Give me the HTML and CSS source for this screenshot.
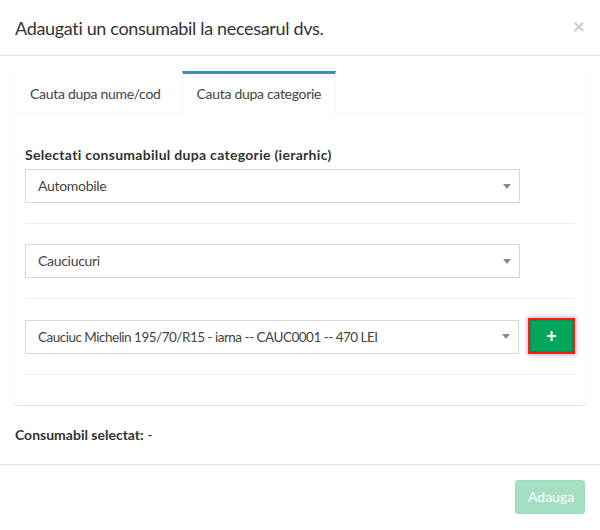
FILE: index.html
```html
<!DOCTYPE html>
<html>
<head>
<meta charset="utf-8">
<link rel="stylesheet" href="styles.css">
</head>
<body>
<div class="modal">
  <div class="modal-header">
    <h4 class="modal-title">Adaugati un consumabil la necesarul dvs.</h4>
    <span class="close">×</span>
  </div>
  <div class="modal-body">
    <div class="tabs-box">
      <ul class="nav-tabs">
        <li class="tab">Cauta dupa nume/cod</li>
        <li class="tab active">Cauta dupa categorie</li>
      </ul>
      <div class="tab-content">
        <label class="lbl">Selectati consumabilul dupa categorie (ierarhic)</label>
        <div class="row">
          <div class="select"><span class="sel-text">Automobile</span><span class="caret"></span></div>
        </div>
        <hr class="sep">
        <div class="row">
          <div class="select"><span class="sel-text">Cauciucuri</span><span class="caret"></span></div>
        </div>
        <hr class="sep">
        <div class="row">
          <div class="select"><span class="sel-text long">Cauciuc Michelin 195/70/R15 - iarna -- CAUC0001 -- 470 LEI</span><span class="caret"></span></div>
          <button class="btn-add">+</button>
        </div>
        <hr class="sep">
      </div>
    </div>
    <p class="selected"><b>Consumabil selectat:</b> -</p>
  </div>
  <div class="modal-footer">
    <button class="btn-submit">Adauga</button>
  </div>
</div>
</body>
</html>
```

FILE: styles.css
```css
* { box-sizing: border-box; }
html, body {
  margin: 0;
  padding: 0;
  background: #fff;
  font-family: "Lato", "Liberation Sans", sans-serif;
  font-size: 14px;
  line-height: 20px;
  color: #333;
}
.modal { width: 600px; }
.modal-header {
  display: flex;
  justify-content: space-between;
  align-items: flex-start;
  padding: 15px 15px 14px 15px;
  border-bottom: 1px solid #e5e5e5;
}
.modal-title {
  margin: 0;
  font-size: 18px;
  font-weight: 400;
  line-height: 26px;
  letter-spacing: -0.33px;
  color: #333;
}
.close {
  font-size: 21px;
  font-weight: 700;
  line-height: 1;
  color: #000;
  opacity: 0.2;
}
.modal-body { padding: 15px 15px 19px 15px; }
.tabs-box {
  background: #fff;
  border-radius: 3px;
  box-shadow: 0 1px 1px rgba(0,0,0,0.12), 0 0 1px rgba(0,0,0,0.06);
  margin-bottom: 20px;
}
.nav-tabs {
  display: flex;
  list-style: none;
  margin: 0;
  padding: 0;
  border-bottom: 1px solid #f4f4f4;
}
.tab {
  padding: 10px 15px;
  border-top: 3px solid transparent;
  margin-right: 6px;
  margin-bottom: -1px;
  color: #444;
  line-height: 20px;
  letter-spacing: -0.3px;
}
.tab.active {
  border-top-color: #3c8dbc;
  border-left: 1px solid #f4f4f4;
  border-right: 1px solid #f4f4f4;
  background: #fff;
  padding: 10px 14px;
}
.tab-content { padding: 31px 10px 10px 10px; }
.lbl {
  display: block;
  font-weight: 700;
  margin-bottom: 4px;
  color: #333;
  letter-spacing: 0.3px;
}
.row {
  display: flex;
  align-items: center;
  gap: 9px;
}
.select {
  width: 495px;
  height: 34px;
  border: 1px solid #d2d6de;
  display: flex;
  align-items: center;
  justify-content: space-between;
  padding: 0 8px 0 12px;
  color: #444;
}
.sel-text { white-space: nowrap; letter-spacing: -0.3px; }
.sel-text.long { font-size: 13.5px; letter-spacing: -0.5px; }
.caret {
  width: 0;
  height: 0;
  border-top: 5px solid #888;
  border-left: 4px solid transparent;
  border-right: 4px solid transparent;
}
.sep {
  border: 0;
  border-top: 1px solid #eee;
  margin: 20px 0;
}
.btn-add {
  width: 47px;
  height: 36px;
  margin-top: -1px;
  background: #00a65a;
  border: 2px solid #ff1a0a;
  color: #fff;
  font-family: "Lato", sans-serif;
  font-size: 18px;
  font-weight: 900;
  line-height: 1;
  padding: 0;
  box-shadow: 0 0 4px 1px rgba(90,80,255,0.45), inset 0 0 0 1px #0b8a57;
}
.selected {
  margin: 0;
  line-height: 20px;
  color: #333;
}
.modal-footer {
  display: flex;
  justify-content: flex-end;
  padding: 15px;
  border-top: 1px solid #e5e5e5;
}
.btn-submit {
  background: #a3dfc2;
  border: 1px solid #9bdcbd;
  border-radius: 3px;
  color: #fff;
  font-family: "Lato", sans-serif;
  font-size: 14px;
  padding: 6px 12px;
  line-height: 20px;
  width: 70px;
}
```
